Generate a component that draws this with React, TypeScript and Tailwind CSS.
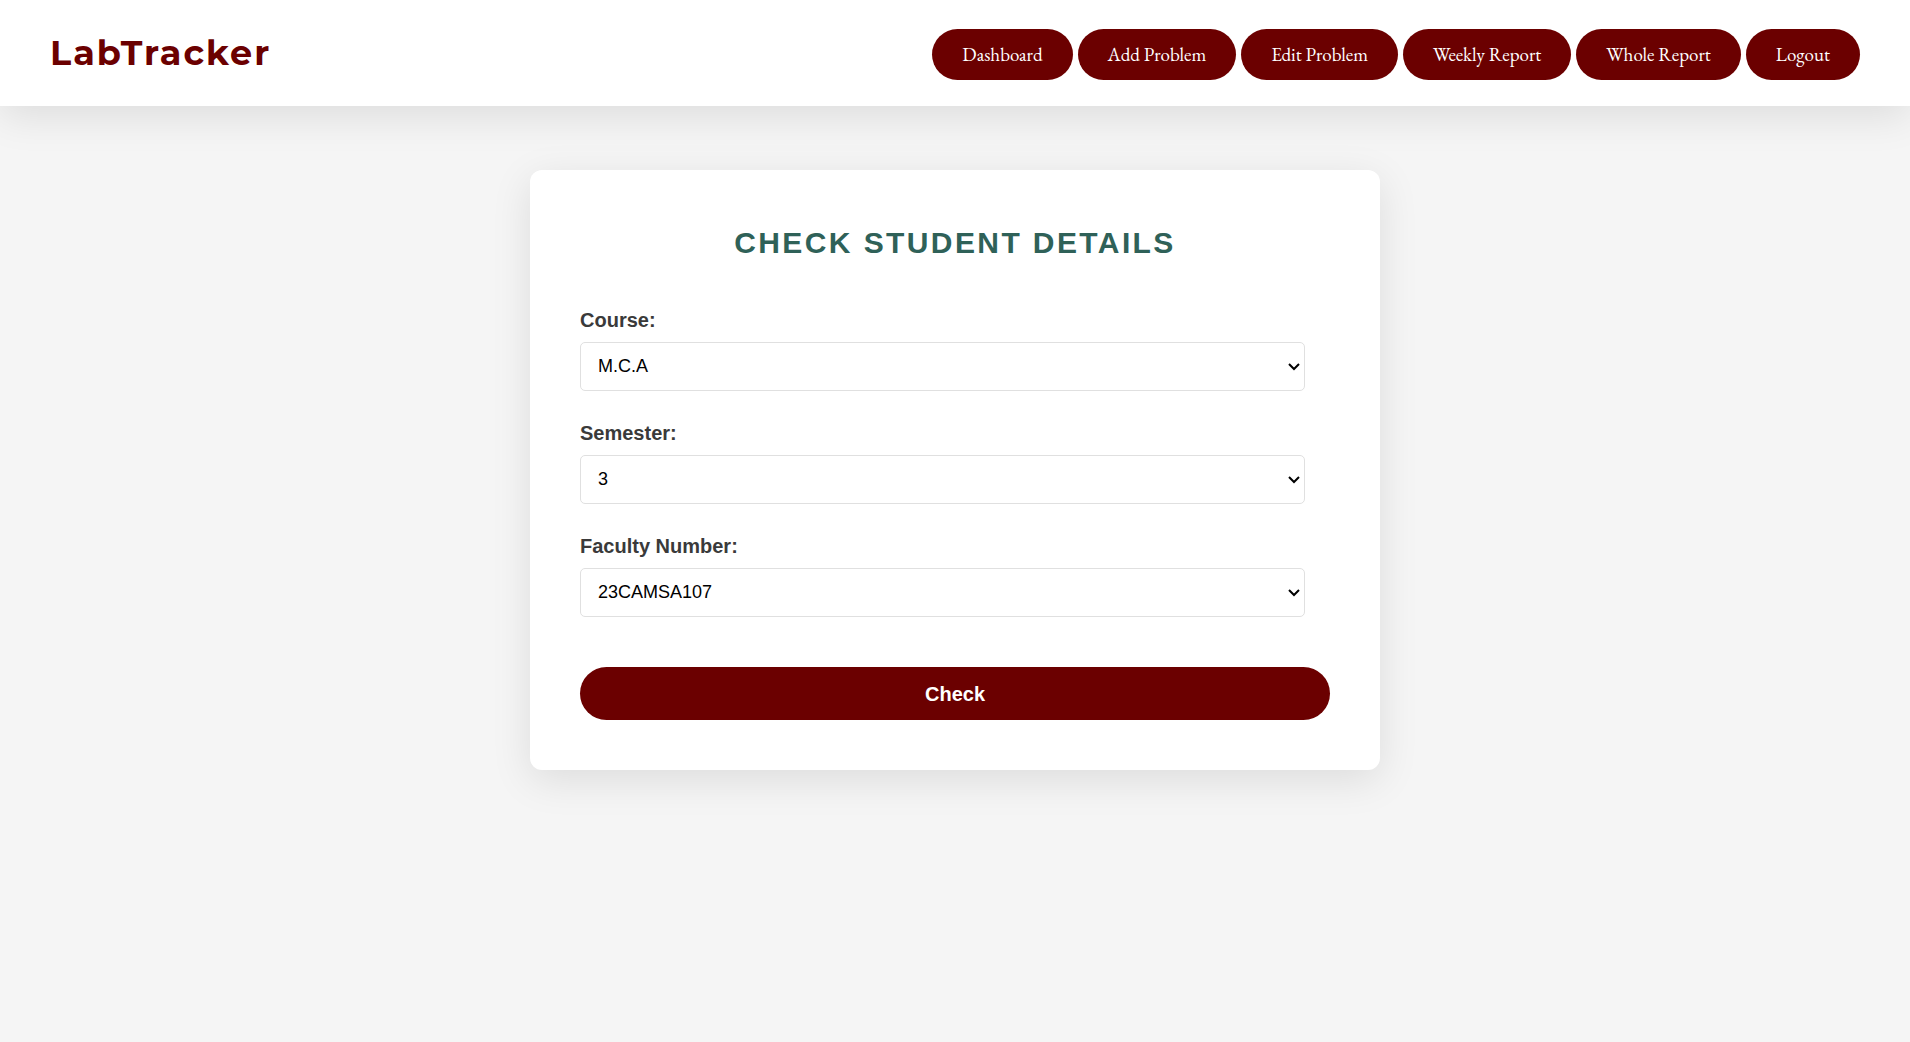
const nav = ["Dashboard", "Add Problem", "Edit Problem", "Weekly Report", "Whole Report", "Logout"];

const fields = [
  { id: "course", label: "Course:", value: "M.C.A" },
  { id: "semester", label: "Semester:", value: "3" },
  { id: "faculty", label: "Faculty Number:", value: "23CAMSA107" },
];

export default function App() {
  return (
    <div className="min-h-screen bg-[#f5f5f5] font-['Liberation_Sans',Arial,sans-serif]">
      <header className="flex items-start justify-between bg-white px-[50px] pt-[29px] pb-[26px] shadow-[0_10px_40px_rgba(0,0,0,0.1)]">
        <a href="#" className="font-[Montserrat,Inter,sans-serif] text-[35px] leading-[48px] font-bold tracking-[2px] text-[#6b0000]">
          LabTracker
        </a>
        <nav className="flex gap-[5px] font-['EB_Garamond','Liberation_Serif',serif]">
          {nav.map((label) => (
            <a
              key={label}
              href="#"
              className="rounded-full bg-[#6b0000] px-[30px] py-[13px] text-center text-[19px] leading-[25px] whitespace-nowrap text-white"
            >
              {label}
            </a>
          ))}
        </nav>
      </header>
      <main className="px-4 pt-16">
        <form className="mx-auto max-w-[850px] rounded-xl bg-white p-[50px] shadow-[0_10px_40px_rgba(0,0,0,0.1)]">
          <h1 className="mb-[42px] text-center text-[30px] leading-[46px] font-bold tracking-[0.08em] text-[#2f6158] uppercase">
            Check Student Details
          </h1>
          {fields.map((f) => (
            <div key={f.id} className="mb-[30px]">
              <label htmlFor={f.id} className="mb-[10px] block text-[20px] leading-6 font-bold text-[#3a3a3a]">
                {f.label}
              </label>
              <div className="relative mr-[25px]">
                <select
                  id={f.id}
                  className="block h-[49px] w-full appearance-none rounded-[5px] border border-[#e0e0e0] bg-white px-[17px] text-[18px] text-black"
                >
                  <option>{f.value}</option>
                </select>
                <svg
                  viewBox="0 0 12 8"
                  className="pointer-events-none absolute top-[21px] right-[5px] h-2 w-3"
                  fill="none"
                  stroke="#000"
                  strokeWidth="2"
                  aria-hidden="true"
                >
                  <path d="M1 1 6 6 11 1" />
                </svg>
              </div>
            </div>
          ))}
          <button type="button" className="mt-[50px] block h-[53px] w-full rounded-full bg-[#6b0000] text-[20px] font-bold text-white">
            Check
          </button>
        </form>
      </main>
    </div>
  );
}
